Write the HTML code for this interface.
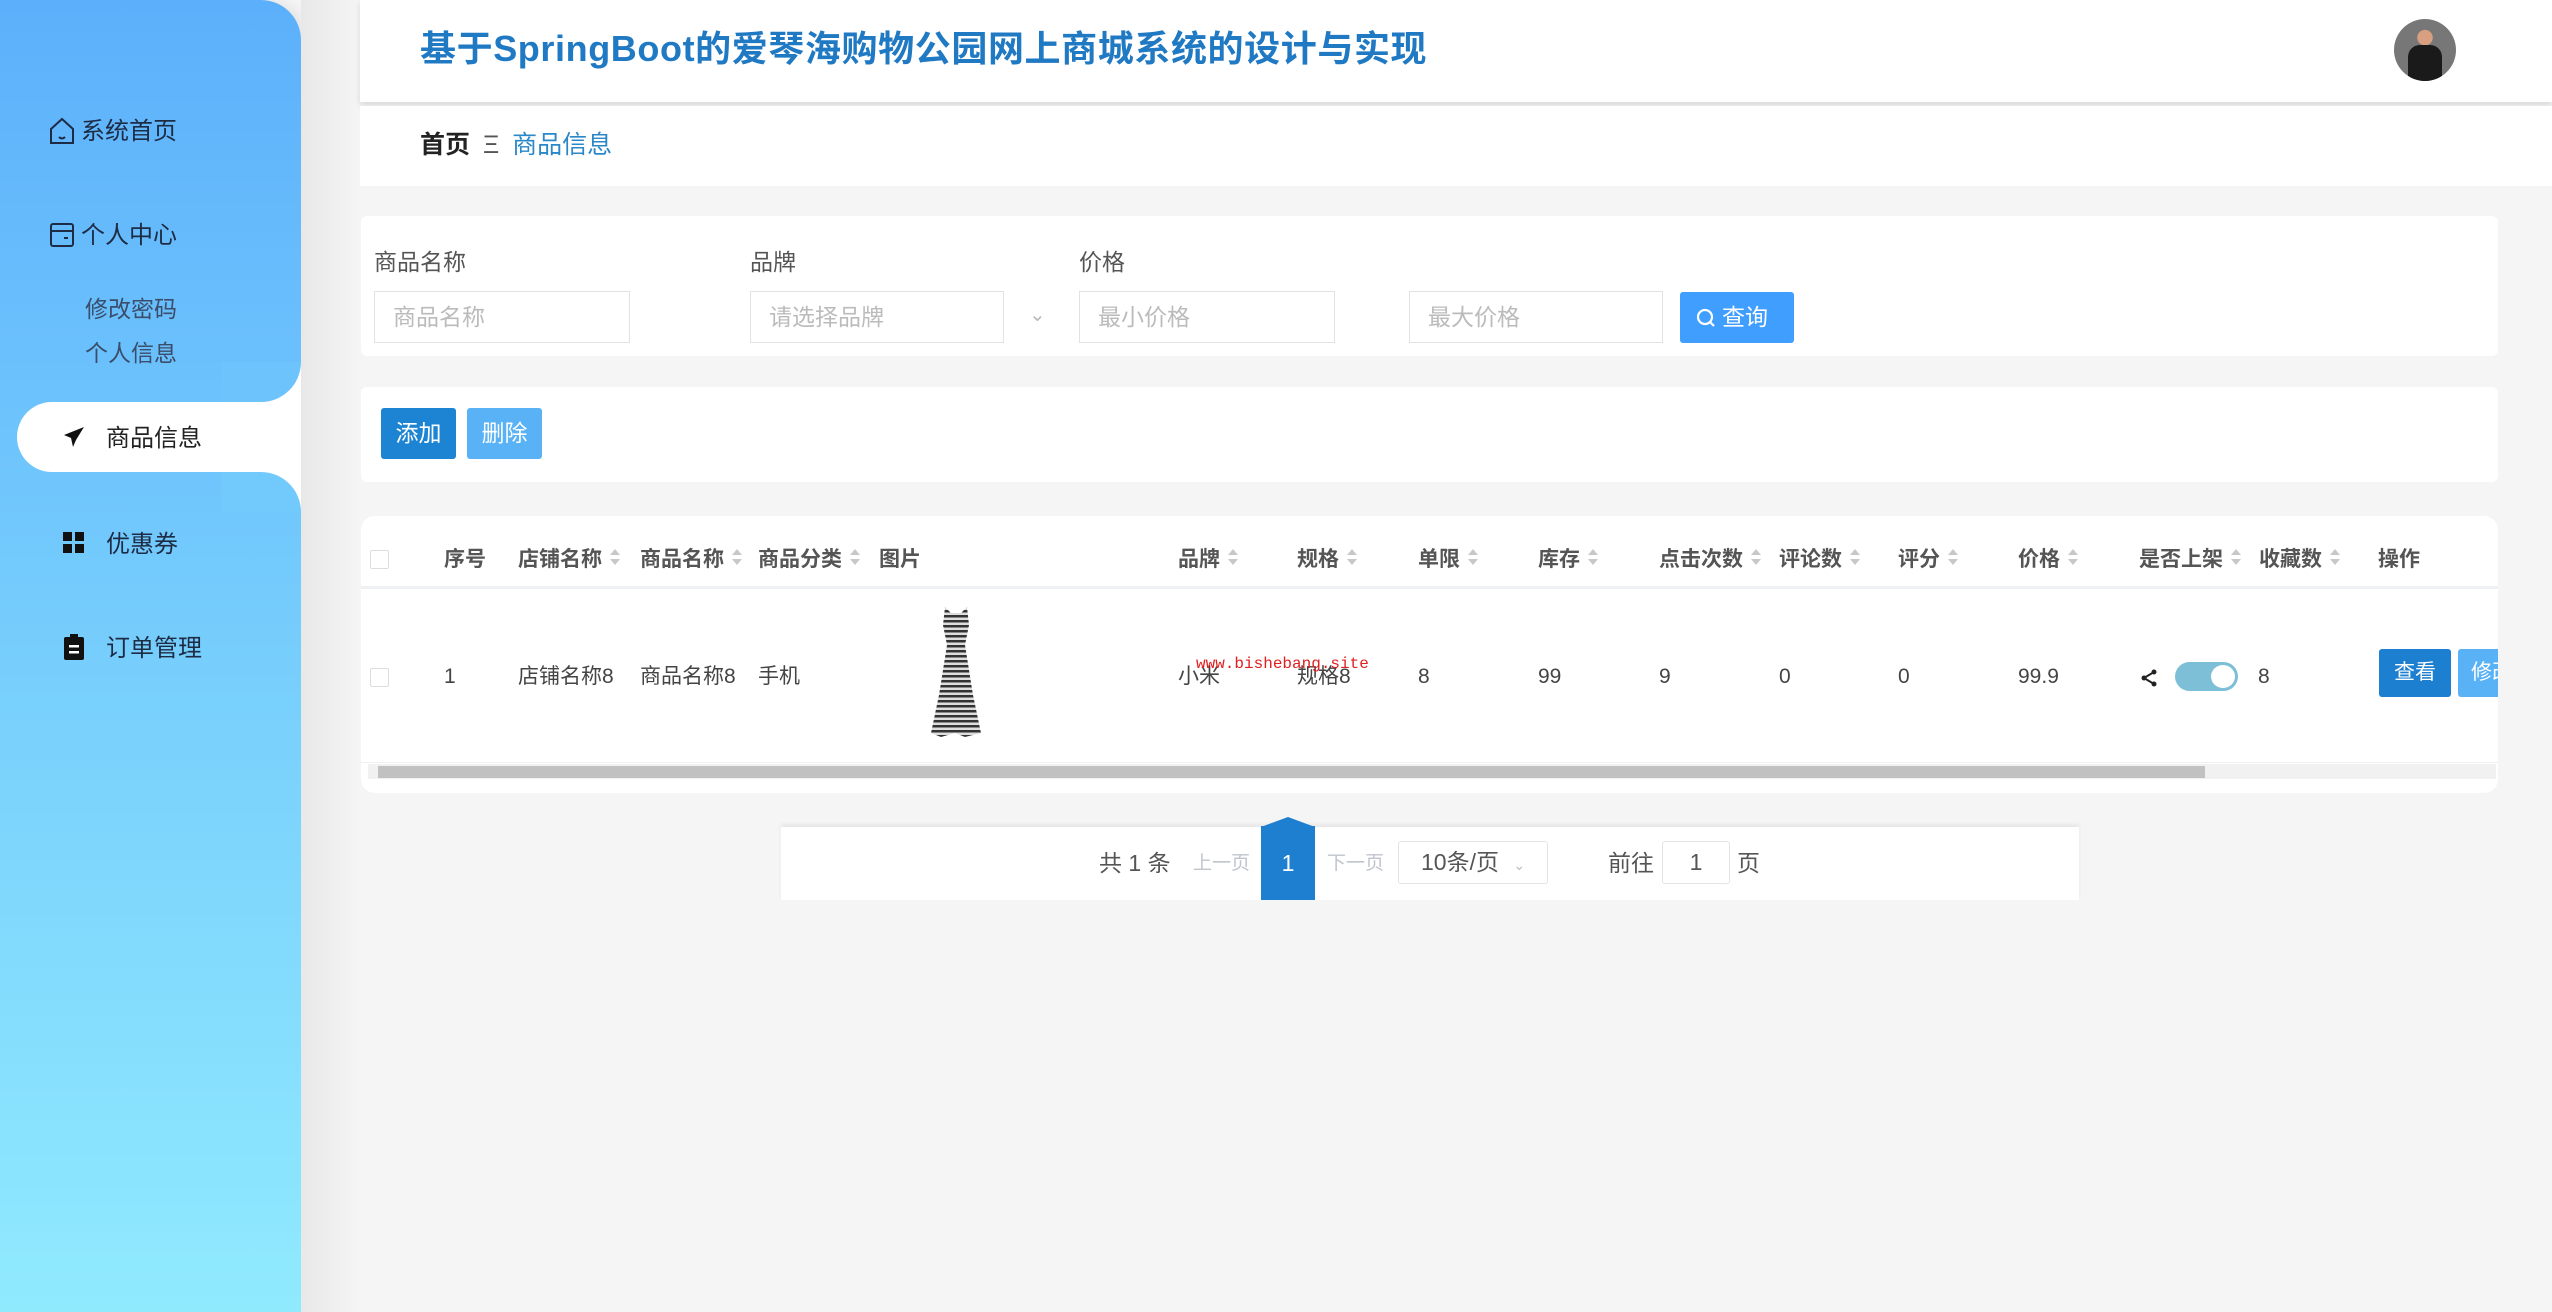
<!DOCTYPE html>
<html><head><meta charset="utf-8"><style>
*{margin:0;padding:0;box-sizing:border-box}
body{width:2552px;height:1312px;background:#f5f5f5;font-family:"Liberation Sans","Noto Sans CJK SC",sans-serif;position:relative;overflow:hidden;color:#333}
.abs{position:absolute}
.sb{left:0;top:0;width:301px;height:1312px;background:linear-gradient(180deg,#5cb0fb 0%,#74cbfc 45%,#90eafe 100%);border-top-right-radius:40px;box-shadow:6px 0 14px rgba(0,0,0,.08)}
.mi{position:absolute;font-size:24px;color:#1d2b44;white-space:nowrap;line-height:30px}
.card{position:absolute;background:#fff;border-radius:6px}
.lbl{position:absolute;font-size:23px;color:#555;line-height:30px}
.inp{position:absolute;height:52px;border:1px solid #e2e2e2;background:#fff;font-size:23px;color:#bbb;padding-left:18px;line-height:50px}
.th{position:absolute;top:545px;font-size:21px;font-weight:bold;color:#555;line-height:30px;white-space:nowrap}
.td{position:absolute;top:662px;font-size:21px;color:#444;line-height:30px;white-space:nowrap}
.sort{display:inline-block;width:10px;height:18px;margin-left:8px;vertical-align:middle;position:relative;top:-2px}
.sort:before{content:"";position:absolute;left:0;top:0;border:5px solid transparent;border-bottom:6px solid #c8c8c8;border-top:0}
.sort:after{content:"";position:absolute;left:0;top:10px;border:5px solid transparent;border-top:6px solid #c8c8c8;border-bottom:0}
</style></head><body>
<div class="abs sb"></div>
<div class="abs" style="left:301px;top:0;width:60px;height:1312px;background:linear-gradient(90deg,#e8e8e8,#f5f5f5)"></div>
<!-- active pill -->
<div class="abs" style="left:17px;top:402px;width:284px;height:70px;background:#fff;border-radius:35px 0 0 35px"></div>
<div class="abs" style="left:261px;top:362px;width:40px;height:40px;background:#fff"></div>
<div class="abs" style="left:221px;top:362px;width:80px;height:40px;background:#6dc4fc;border-bottom-right-radius:40px"></div>
<div class="abs" style="left:261px;top:472px;width:40px;height:40px;background:#fff"></div>
<div class="abs" style="left:221px;top:472px;width:80px;height:40px;background:#72c9fc;border-top-right-radius:40px"></div>

<svg class="abs" style="left:49px;top:117px" width="26" height="28" viewBox="0 0 26 28"><path d="M2 12 L13 2 L24 12 V26 H2 Z" fill="none" stroke="#1d2b44" stroke-width="2"/><path d="M10 20 q3 3 6 0" fill="none" stroke="#1d2b44" stroke-width="2"/></svg>
<div class="mi" style="left:81px;top:117px">系统首页</div>
<svg class="abs" style="left:49px;top:222px" width="26" height="26" viewBox="0 0 26 26"><rect x="2" y="2" width="22" height="22" rx="2" fill="none" stroke="#1d2b44" stroke-width="2"/><path d="M2 9 H24 M15 16 H19" stroke="#1d2b44" stroke-width="2"/></svg>
<div class="mi" style="left:81px;top:221px">个人中心</div>
<div class="mi" style="left:85px;top:294px;font-size:23px;color:#3a4d6a">修改密码</div>
<div class="mi" style="left:85px;top:338px;font-size:23px;color:#3a4d6a">个人信息</div>
<svg class="abs" style="left:63px;top:426px" width="22" height="22" viewBox="0 0 22 22"><path d="M21 1 L1 9 L8 12 L10 21 L13 14 L21 1Z M8 12 L21 1" fill="#111"/></svg>
<div class="mi" style="left:106px;top:424px;color:#222">商品信息</div>
<svg class="abs" style="left:63px;top:532px" width="22" height="22" viewBox="0 0 22 22"><rect x="0" y="0" width="9" height="9" fill="#111"/><rect x="12" y="0" width="9" height="9" fill="#111"/><rect x="0" y="12" width="9" height="9" fill="#111"/><rect x="12" y="12" width="9" height="9" fill="#111"/></svg>
<div class="mi" style="left:106px;top:530px">优惠券</div>
<svg class="abs" style="left:64px;top:634px" width="20" height="26" viewBox="0 0 20 26"><rect x="0" y="3" width="20" height="23" rx="2" fill="#111"/><rect x="6" y="0" width="8" height="6" fill="#111"/><rect x="5" y="11" width="10" height="2.5" fill="#fff"/><rect x="5" y="17" width="10" height="2.5" fill="#fff"/></svg>
<div class="mi" style="left:106px;top:634px">订单管理</div>

<!-- header -->
<div class="abs" style="left:360px;top:0;width:2192px;height:102px;background:#fff;box-shadow:0 3px 6px rgba(0,0,0,.12)"></div>
<div class="abs" style="left:420px;top:27px;font-size:36px;letter-spacing:0.6px;font-weight:bold;color:#2079c3;line-height:44px;white-space:nowrap">基于SpringBoot的爱琴海购物公园网上商城系统的设计与实现</div>
<div class="abs" style="left:2394px;top:19px;width:62px;height:62px;border-radius:50%;background:radial-gradient(circle at 50% 30%,#d8a080 0 14%,#777 15%);overflow:hidden"><div style="position:absolute;left:14px;top:26px;width:34px;height:40px;background:#1a1a1a;border-radius:12px 12px 0 0"></div></div>
<div class="abs" style="left:360px;top:106px;width:2192px;height:80px;background:#fff"></div>
<div class="abs" style="left:420px;top:130px;font-size:25px;line-height:30px;white-space:nowrap"><b style="color:#222">首页</b> <span style="color:#555;margin:0 6px">Ξ</span> <span style="color:#2a87c8">商品信息</span></div>

<!-- search -->
<div class="card" style="left:361px;top:216px;width:2137px;height:140px"></div>
<div class="lbl" style="left:374px;top:247px">商品名称</div>
<div class="lbl" style="left:750px;top:247px">品牌</div>
<div class="lbl" style="left:1079px;top:247px">价格</div>
<div class="inp" style="left:374px;top:291px;width:256px">商品名称</div>
<div class="inp" style="left:750px;top:291px;width:254px">请选择品牌</div>
<div class="abs" style="left:1029px;top:302px;font-size:20px;color:#bbb">⌄</div>
<div class="inp" style="left:1079px;top:291px;width:256px">最小价格</div>
<div class="inp" style="left:1409px;top:291px;width:254px">最大价格</div>
<div class="abs" style="left:1680px;top:292px;width:114px;height:51px;background:#409eff;border-radius:3px;color:#fff;font-size:23px;line-height:51px;padding-left:16px"><svg width="20" height="20" viewBox="0 0 20 20" style="vertical-align:-3px;margin-right:6px"><circle cx="9" cy="9" r="7" fill="none" stroke="#fff" stroke-width="2.2"/><path d="M14 14 L18 18" stroke="#fff" stroke-width="2.2"/></svg>查询</div>

<!-- buttons -->
<div class="card" style="left:361px;top:387px;width:2137px;height:95px"></div>
<div class="abs" style="left:381px;top:408px;width:75px;height:51px;background:#1d84d4;border-radius:3px;color:#fff;font-size:23px;line-height:51px;text-align:center">添加</div>
<div class="abs" style="left:467px;top:408px;width:75px;height:51px;background:#5ab2f6;border-radius:3px;color:#fff;font-size:23px;line-height:51px;text-align:center">删除</div>

<!-- table -->
<div class="card" style="left:361px;top:516px;width:2137px;height:277px;border-radius:14px"></div>
<div class="abs" style="left:361px;top:586px;width:2137px;height:3px;background:#eef0f3"></div>
<div class="abs" style="left:361px;top:762px;width:2137px;height:1px;background:#eef0f3"></div>
<div class="abs" style="left:368px;top:764px;width:2128px;height:15px;background:#f1f1f1"></div>
<div class="abs" style="left:378px;top:766px;width:1827px;height:12px;background:#c1c1c1"></div>
<div class="abs" style="left:370px;top:550px;width:19px;height:19px;border:1px solid #ddd;border-radius:2px"></div>
<div class="abs" style="left:370px;top:668px;width:19px;height:19px;border:1px solid #ddd;border-radius:2px"></div>
<div class="th" style="left:444px">序号</div>
<div class="th" style="left:518px">店铺名称<i class="sort"></i></div>
<div class="th" style="left:640px">商品名称<i class="sort"></i></div>
<div class="th" style="left:758px">商品分类<i class="sort"></i></div>
<div class="th" style="left:879px">图片</div>
<div class="th" style="left:1178px">品牌<i class="sort"></i></div>
<div class="th" style="left:1297px">规格<i class="sort"></i></div>
<div class="th" style="left:1418px">单限<i class="sort"></i></div>
<div class="th" style="left:1538px">库存<i class="sort"></i></div>
<div class="th" style="left:1659px">点击次数<i class="sort"></i></div>
<div class="th" style="left:1779px">评论数<i class="sort"></i></div>
<div class="th" style="left:1898px">评分<i class="sort"></i></div>
<div class="th" style="left:2018px">价格<i class="sort"></i></div>
<div class="th" style="left:2139px">是否上架<i class="sort"></i></div>
<div class="th" style="left:2259px">收藏数<i class="sort"></i></div>
<div class="th" style="left:2378px">操作</div>
<div class="td" style="left:444px">1</div>
<div class="td" style="left:518px">店铺名称8</div>
<div class="td" style="left:640px">商品名称8</div>
<div class="td" style="left:758px">手机</div>
<svg class="abs" style="left:925px;top:605px" width="62" height="135" viewBox="0 0 62 135"><defs><pattern id="st" width="6" height="5" patternUnits="userSpaceOnUse"><rect width="6" height="2.5" fill="#333"/><rect y="2.5" width="6" height="2.5" fill="#ddd"/></pattern></defs><path d="M20 2 L26 8 L36 8 L42 2 L44 20 L40 40 L48 90 L56 128 L40 132 L30 128 L16 132 L6 128 L14 90 L22 40 L18 20 Z" fill="url(#st)"/></svg>
<div class="td" style="left:1178px">小米</div>
<div class="td" style="left:1297px">规格8</div>
<div class="abs" style="left:1196px;top:655px;font-size:16px;color:#e02020;font-family:'Liberation Mono',monospace">www.bishebang.site</div>
<div class="td" style="left:1418px">8</div>
<div class="td" style="left:1538px">99</div>
<div class="td" style="left:1659px">9</div>
<div class="td" style="left:1779px">0</div>
<div class="td" style="left:1898px">0</div>
<div class="td" style="left:2018px">99.9</div>
<svg class="abs" style="left:2140px;top:669px" width="18" height="18" viewBox="0 0 18 18"><path d="M14 3 L4 9 L14 15" fill="none" stroke="#222" stroke-width="2"/><circle cx="14" cy="3" r="2.5" fill="#222"/><circle cx="4" cy="9" r="2.5" fill="#222"/><circle cx="14" cy="15" r="2.5" fill="#222"/></svg>
<div class="abs" style="left:2175px;top:662px;width:63px;height:29px;border-radius:15px;background:#7cbfd6"></div>
<div class="abs" style="left:2211px;top:665px;width:24px;height:23px;border-radius:50%;background:#fff"></div>
<div class="td" style="left:2258px">8</div>
<div class="abs" style="left:2379px;top:649px;width:72px;height:48px;background:#1d7fcf;border-radius:3px;color:#fff;font-size:21px;line-height:48px;text-align:center">查看</div>
<div class="abs" style="left:2458px;top:649px;width:40px;height:48px;background:#5ab2f6;border-radius:3px 0 0 3px;color:#fff;font-size:21px;line-height:48px;padding-left:13px;overflow:hidden;white-space:nowrap">修改</div>

<!-- pagination -->
<div class="abs" style="left:781px;top:827px;width:1298px;height:73px;background:#fff;box-shadow:0 -3px 4px rgba(0,0,0,.06)"></div>
<div class="abs" style="left:1099px;top:848px;font-size:23px;color:#555;line-height:30px">共 1 条</div>
<div class="abs" style="left:1193px;top:851px;font-size:19px;color:#c0c4cc;line-height:26px">上一页</div>
<div class="abs" style="left:1261px;top:826px;width:54px;height:74px;background:#1e7fd0"></div>
<div class="abs" style="left:1261px;top:817px;width:0;height:0;border-left:27px solid transparent;border-right:27px solid transparent;border-bottom:10px solid #1e7fd0"></div>
<div class="abs" style="left:1261px;top:848px;width:54px;text-align:center;color:#fff;font-size:23px;line-height:30px">1</div>
<div class="abs" style="left:1327px;top:851px;font-size:19px;color:#c0c4cc;line-height:26px">下一页</div>
<div class="abs" style="left:1398px;top:841px;width:150px;height:43px;border:1px solid #e4e4e4;border-radius:3px;font-size:23px;color:#555;line-height:41px;padding-left:22px">10条/页 <span style="font-size:14px;color:#bbb;margin-left:8px">⌄</span></div>
<div class="abs" style="left:1608px;top:848px;font-size:23px;color:#555;line-height:30px">前往</div>
<div class="abs" style="left:1662px;top:841px;width:68px;height:43px;border:1px solid #e4e4e4;border-radius:3px;font-size:23px;color:#555;line-height:41px;text-align:center">1</div>
<div class="abs" style="left:1737px;top:848px;font-size:23px;color:#555;line-height:30px">页</div>
</body></html>
